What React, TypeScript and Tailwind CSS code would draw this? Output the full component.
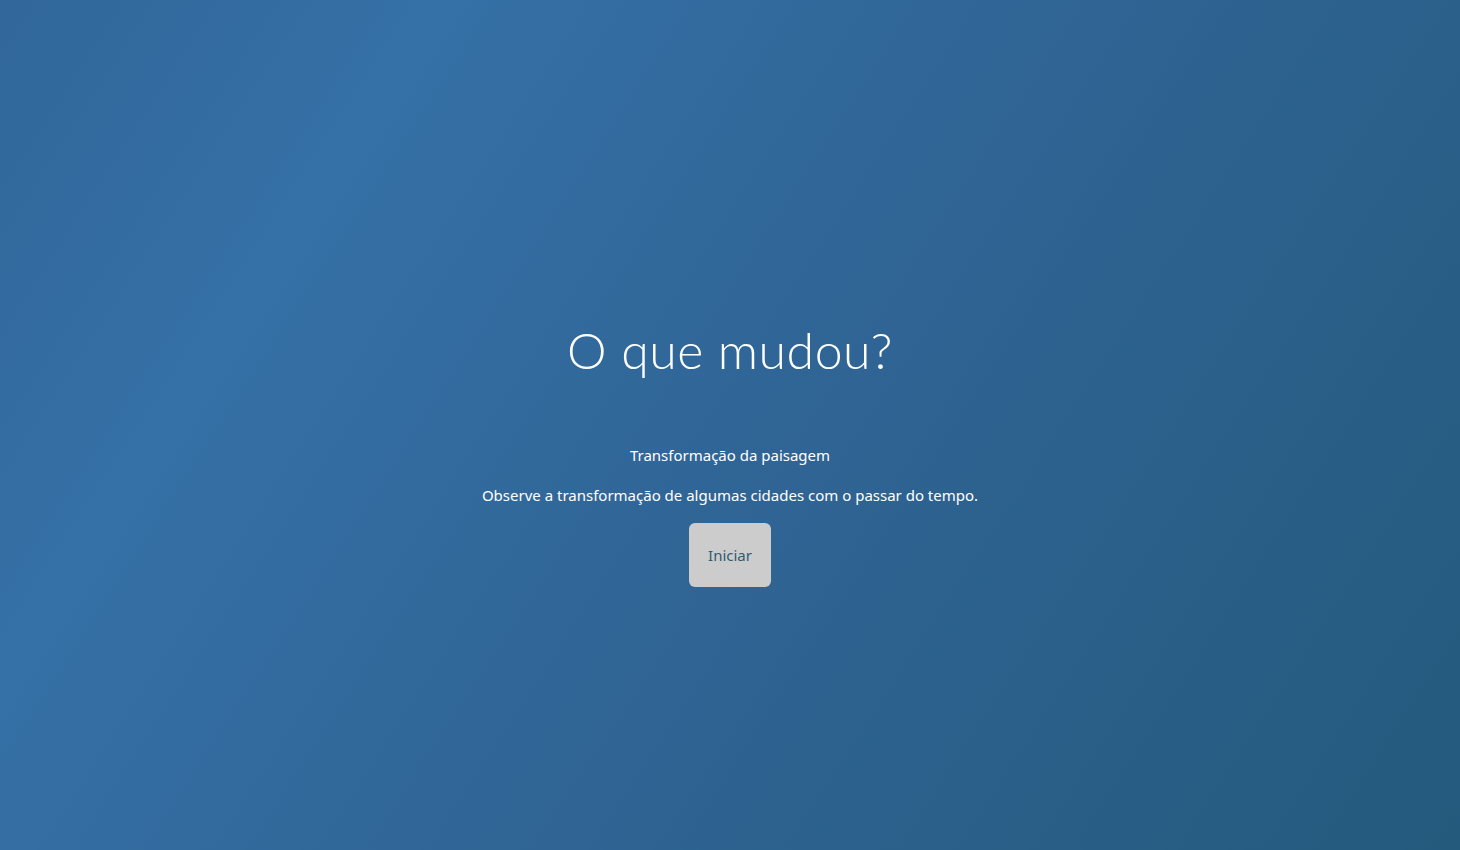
export default function App() {
  return (
    <div className="min-h-[850px] w-full bg-[linear-gradient(123deg,#31679a_0%,#3570a6_22%,#2f6494_55%,#245a7c_100%)] flex flex-col items-center text-white font-['Noto_Sans',sans-serif]">
      <h1 className="mt-[318px] text-[50px] leading-[64px] font-light font-['Lato',sans-serif] tracking-[0.5px]">
        O que mudou?
      </h1>
      <p className="mt-[61px] text-[15px] leading-[24px]">Transformação da paisagem</p>
      <p className="mt-[16px] text-[15px] leading-[24px]">
        Observe a transformação de algumas cidades com o passar do tempo.
      </p>
      <button
        type="button"
        className="mt-[16px] w-[82px] h-[64px] rounded-[6px] bg-[#cccccc] text-[#2e5d70] text-[15px]"
      >
        Iniciar
      </button>
    </div>
  )
}
